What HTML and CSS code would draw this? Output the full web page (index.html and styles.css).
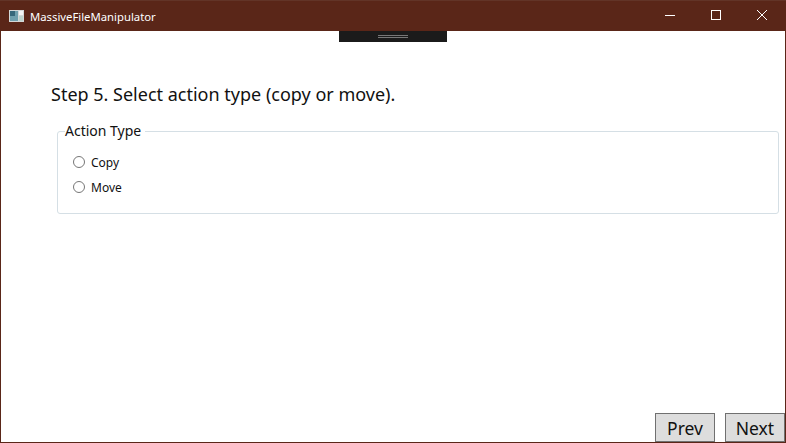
FILE: index.html
```html
<!DOCTYPE html>
<html lang="en">
<head>
    <meta charset="UTF-8">
    <meta name="viewport" content="width=device-width, initial-scale=1.0">
    <title>MassiveFileManipulator</title>
    <link rel="stylesheet" href="styles.css">
</head>
<body>
    <div class="window">
        <div class="titlebar">
            <svg class="app-icon" width="15" height="12" viewBox="0 0 15 12">
                <rect x="0" y="0" width="15" height="12" fill="#d3d8d8"/>
                <rect x="1" y="1" width="8" height="10" fill="#6fa0ad"/>
                <rect x="1" y="1" width="5" height="5" fill="#36687a"/>
                <rect x="10" y="1" width="4" height="4" fill="#f3f5f5"/>
                <rect x="10" y="6" width="4" height="5" fill="#bcd4cd"/>
            </svg>
            <span class="app-title">MassiveFileManipulator</span>
            <div class="caption-buttons">
                <button class="caption-btn">
                    <svg width="10" height="10" viewBox="0 0 10 10"><path d="M0 5.5H10" stroke="#fff" fill="none"/></svg>
                </button>
                <button class="caption-btn">
                    <svg width="10" height="10" viewBox="0 0 10 10"><rect x="0.5" y="0.5" width="9" height="9" stroke="#fff" fill="none"/></svg>
                </button>
                <button class="caption-btn">
                    <svg width="10" height="10" viewBox="0 0 10 10"><path d="M0 0L10 10M10 0L0 10" stroke="#fff" fill="none"/></svg>
                </button>
            </div>
        </div>

        <div class="debug-bar"><div class="debug-grip"></div></div>

        <div class="content">
            <h1 class="step-title">Step 5. Select action type (copy or move).</h1>

            <fieldset class="group-box">
                <legend>Action Type</legend>
                <label class="radio-row"><input type="radio" name="action"><span>Copy</span></label>
                <label class="radio-row"><input type="radio" name="action"><span>Move</span></label>
            </fieldset>

            <div class="nav-buttons">
                <button class="nav-btn">Prev</button>
                <button class="nav-btn">Next</button>
            </div>
        </div>
    </div>
</body>
</html>
```
FILE: styles.css
```css
html, body {
    margin: 0;
    height: 100%;
    overflow: hidden;
}
body {
    font-family: "Noto Sans", "Open Sans", sans-serif;
    background-color: #fff;
    color: #111;
}
.window {
    position: relative;
    box-sizing: border-box;
    width: 786px;
    height: 443px;
    display: flex;
    flex-direction: column;
    border: 1px solid #5a2618;
    border-top: none;
}
.titlebar {
    box-sizing: border-box;
    height: 31px;
    flex: none;
    margin: 0 -1px;
    padding: 0 1px 0 9px;
    display: flex;
    align-items: center;
    background-color: #5a2618;
    border-top: 1px solid #623427;
    color: #fff;
}
.app-icon {
    margin-right: 6px;
}
.app-title {
    font-size: 11.3px;
}
.caption-buttons {
    margin-left: auto;
    display: flex;
}
.caption-btn {
    width: 46px;
    height: 28px;
    margin-bottom: 2px;
    padding: 0;
    border: none;
    background: none;
    display: flex;
    align-items: center;
    justify-content: center;
}
.debug-bar {
    position: absolute;
    left: 338px;
    top: 31px;
    width: 108px;
    height: 11px;
    background-color: #1b1b1b;
    display: flex;
    align-items: center;
    justify-content: center;
}
.debug-grip {
    width: 30px;
    height: 1px;
    border-top: 1px solid #777;
    border-bottom: 1px solid #777;
}
.content {
    flex: 1;
    display: flex;
    flex-direction: column;
    padding: 51px 0 0 50px;
}
.step-title {
    margin: 0;
    font-size: 18px;
    font-weight: 400;
    line-height: 24px;
}
.group-box {
    box-sizing: border-box;
    width: 722px;
    height: 92px;
    margin: 16px 0 0 6px;
    padding: 10px 0 0 15px;
    border: 1px solid #d5dfe5;
    border-radius: 3px;
}
.group-box legend {
    margin-left: -8px;
    padding: 0 4px 0 0;
    font-size: 14px;
    line-height: 18px;
}
.radio-row {
    height: 25px;
    display: flex;
    align-items: center;
    font-size: 12px;
}
.radio-row input {
    width: 12px;
    height: 12px;
    margin: 0 6px 1px 0;
}
.nav-buttons {
    margin-top: auto;
    display: flex;
    justify-content: flex-end;
    gap: 10px;
}
.nav-btn {
    box-sizing: border-box;
    width: 60px;
    height: 29px;
    padding: 1px 0 0;
    font-family: inherit;
    font-size: 17.5px;
    color: #111;
    background-color: #ddd;
    border: 1px solid #707070;
}
```
